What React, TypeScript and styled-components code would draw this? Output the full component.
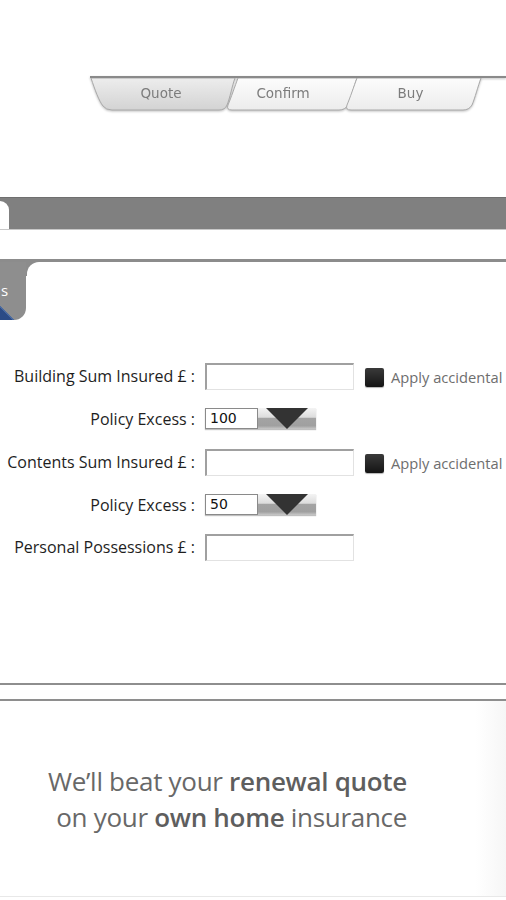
import React from "react";
import styled, { createGlobalStyle } from "styled-components";

const GlobalStyle = createGlobalStyle`
  html, body {
    margin: 0;
    padding: 0;
    background: #fff;
  }
  body {
    width: 506px;
    overflow-x: hidden;
    font-family: "Open Sans", "Liberation Sans", sans-serif;
  }
`;

type TabShape = "first" | "middle";

const tabSvg = (w: number, shape: TabShape, selected: boolean) => {
  const top = selected ? "#ededed" : "#fcfcfc";
  const bottom = selected ? "#d3d3d3" : "#ececec";
  const r = w - 5;
  const d =
    shape === "first"
      ? `M1,0 C5,12 9,23 13,28 Q16,32 22,32 L${r - 16},32 Q${r - 10},32 ${r - 8},27 C${r - 5},20 ${r - 3},8 ${r},0 Z`
      : `M16,0 L${r},0 C${r - 3},8 ${r - 6},20 ${r - 9},27 Q${r - 12},32 ${r - 18},32 L10,32 Q4,32 6,27 C9,20 13,8 16,0 Z`;
  const svg = `<svg xmlns="http://www.w3.org/2000/svg" width="${w}" height="34" viewBox="0 0 ${w} 34"><defs><linearGradient id="g" x1="0" y1="0" x2="0" y2="1"><stop offset="0" stop-color="${top}"/><stop offset="1" stop-color="${bottom}"/></linearGradient></defs><path d="${d}" fill="url(#g)" stroke="#a9a9a9" stroke-width="1"/></svg>`;
  return `url("data:image/svg+xml,${encodeURIComponent(svg)}")`;
};

const TabStrip = styled.div`
  display: flex;
  margin: 76px 0 0 90px;
  border-top: 2px solid #8a8a8a;
  filter: drop-shadow(0 1px 1px rgba(0, 0, 0, 0.25));
`;

const Tab = styled.div<{ $w: number; $shape: TabShape; $selected?: boolean; $overlap: number; $shift: number }>`
  position: relative;
  z-index: ${(p) => (p.$selected ? 2 : 1)};
  display: flex;
  align-items: center;
  justify-content: center;
  box-sizing: border-box;
  width: ${(p) => p.$w}px;
  height: 34px;
  margin-left: ${(p) => -p.$overlap}px;
  padding: 0 ${(p) => Math.max(p.$shift, 0)}px 4px ${(p) => Math.max(-p.$shift, 0)}px;
  background: ${(p) => tabSvg(p.$w, p.$shape, !!p.$selected)} no-repeat;
  font-family: "DejaVu Sans", "Liberation Sans", sans-serif;
  font-size: 13.5px;
  color: #7c7c7c;
`;

const GreyBar = styled.div`
  display: flex;
  height: 31px;
  margin-top: 85px;
  background: #808080;
  border-top: 1px solid #6f6f6f;
  border-bottom: 1px solid #c8c8c8;
`;

const WhiteNub = styled.div`
  width: 9px;
  margin-top: 3px;
  background: #fff;
  border-top-right-radius: 10px;
`;

const SectionHead = styled.div`
  display: flex;
  height: 58px;
  margin-top: 29px;
  border-top: 3px solid #8c8c8c;
  background: linear-gradient(#8c8c8c 0 14px, transparent 14px) no-repeat;
`;

const SideTab = styled.div`
  display: flex;
  align-items: center;
  width: 26px;
  padding-bottom: 2px;
  box-sizing: border-box;
  background:
    linear-gradient(45deg, #2b4b86 0 9px, #4a6aa0 9px 10px, transparent 10px),
    #8e8e8e;
  border-bottom-right-radius: 12px;
  font-size: 15px;
  color: #fff;
  text-indent: 1px;
  overflow: hidden;
`;

const SectionPanel = styled.div`
  flex: 1;
  margin-left: 1px;
  background: #fff;
  border-top-left-radius: 12px;
`;

const Form = styled.div`
  display: grid;
  grid-template-columns: 195px 1fr;
  grid-template-rows: 43px 43px 43px 43px 41px;
  column-gap: 10px;
  margin-top: 34px;
`;

const Label = styled.div`
  display: flex;
  align-items: center;
  justify-content: flex-end;
  font-size: 16px;
  color: #1e1e1e;
  white-space: nowrap;
`;

const Controls = styled.div`
  display: flex;
  align-items: center;
  gap: 11px;
`;

const TextBox = styled.div`
  box-sizing: border-box;
  width: 149px;
  height: 27px;
  margin-top: 2px;
  background: #fff;
  border-top: 2px solid #a0a0a0;
  border-left: 2px solid #a0a0a0;
  border-right: 1px solid #e2e2e2;
  border-bottom: 1px solid #e2e2e2;
`;

const Check = styled.label`
  display: flex;
  align-items: center;
  gap: 7px;
  margin-top: 3px;
  font-size: 14.7px;
  color: #6e6e6e;
  white-space: nowrap;
`;

const CheckBox = styled.span`
  width: 19px;
  height: 19px;
  border-radius: 2px;
  background: linear-gradient(#3a3a3a, #141414);
  box-shadow: 0 1px 1px rgba(0, 0, 0, 0.3);
`;

const Select = styled.div`
  display: flex;
  height: 21px;
  box-shadow: 0 1px 1px rgba(0, 0, 0, 0.25);
`;

const SelectValue = styled.div`
  box-sizing: border-box;
  width: 53px;
  padding: 0 0 0 4px;
  background: #fff;
  border: 1px solid #8a8a8a;
  font-family: "DejaVu Sans", "Liberation Sans", sans-serif;
  font-size: 14px;
  line-height: 19px;
  color: #111;
`;

const SelectArrow = styled.div`
  display: flex;
  justify-content: center;
  width: 58px;
  background: linear-gradient(#f4f4f4 0, #dcdcdc 45%, #a4a4a4 46%, #a0a0a0 85%, #c8c8c8 100%);

  &::after {
    content: "";
    width: 0;
    height: 0;
    border-left: 21px solid transparent;
    border-right: 21px solid transparent;
    border-top: 21px solid #333;
  }
`;

const Rules = styled.div`
  margin-top: 116px;
  height: 14px;
  border-top: 2px solid #8e8e8e;
  border-bottom: 2px solid #8e8e8e;
`;

const Banner = styled.div`
  box-sizing: border-box;
  height: 196px;
  padding: 62px 0 0 48px;
  background: linear-gradient(to right, #fff 0, #fff 94%, #f6f6f6 100%);
  border-bottom: 1px solid #e8e8e8;
`;

const Slogan = styled.p`
  display: inline-block;
  margin: 0;
  text-align: right;
  font-size: 26px;
  line-height: 36px;
  color: #686868;
  letter-spacing: -0.3px;

  b {
    font-weight: 600;
    color: #5e5e5e;
  }
`;

const fields = [
  { label: "Building Sum Insured £ :", kind: "text", check: true },
  { label: "Policy Excess :", kind: "select", value: "100" },
  { label: "Contents Sum Insured £ :", kind: "text", check: true },
  { label: "Policy Excess :", kind: "select", value: "50" },
  { label: "Personal Possessions £ :", kind: "text" },
];

export default function App() {
  return (
    <>
      <GlobalStyle />
      <TabStrip>
        <Tab $w={150} $shape="first" $selected $overlap={0} $shift={8}>Quote</Tab>
        <Tab $w={140} $shape="middle" $overlap={18} $shift={18}>Confirm</Tab>
        <Tab $w={145} $shape="middle" $overlap={21} $shift={6}>Buy</Tab>
      </TabStrip>

      <GreyBar>
        <WhiteNub />
      </GreyBar>

      <SectionHead>
        <SideTab>s</SideTab>
        <SectionPanel />
      </SectionHead>

      <Form>
        {fields.map((f, i) => (
          <React.Fragment key={i}>
            <Label>{f.label}</Label>
            <Controls>
              {f.kind === "text" ? (
                <TextBox />
              ) : (
                <Select>
                  <SelectValue>{f.value}</SelectValue>
                  <SelectArrow />
                </Select>
              )}
              {f.check && (
                <Check>
                  <CheckBox />
                  Apply accidental
                </Check>
              )}
            </Controls>
          </React.Fragment>
        ))}
      </Form>

      <Rules />
      <Banner>
        <Slogan>
          We’ll beat your <b>renewal quote</b>
          <br />
          on your <b>own home</b> insurance
        </Slogan>
      </Banner>
    </>
  );
}
